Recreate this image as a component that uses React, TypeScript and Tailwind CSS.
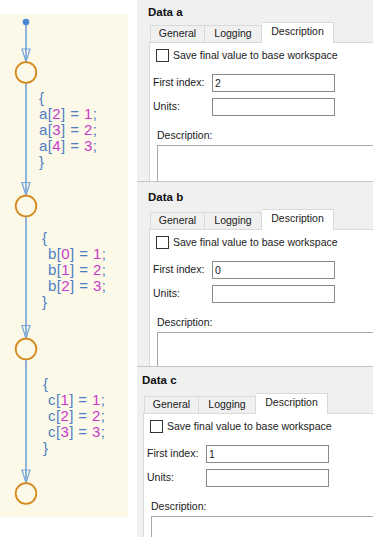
import React from "react";

const blue = "text-[#4d7fc4]";
const pink = "text-[#c63cc6]";

type Block = {
  name: string;
  rows: [string, string][];
  top: string;
  braceLeft: string;
  rowLeft: string;
};

const blocks: Block[] = [
  {
    name: "a",
    rows: [["2", "1"], ["3", "2"], ["4", "3"]],
    top: "top-[90px]",
    braceLeft: "left-[39px]",
    rowLeft: "pl-0",
  },
  {
    name: "b",
    rows: [["0", "1"], ["1", "2"], ["2", "3"]],
    top: "top-[230px]",
    braceLeft: "left-[42px]",
    rowLeft: "pl-[6px]",
  },
  {
    name: "c",
    rows: [["1", "1"], ["2", "2"], ["3", "3"]],
    top: "top-[376px]",
    braceLeft: "left-[43px]",
    rowLeft: "pl-[5px]",
  },
];

const circles = [72.5, 206, 349, 493.5];

function Chart() {
  return (
    <div className="relative w-[128px] h-[537px] shrink-0">
      <div className="absolute left-0 top-[14px] w-[128px] h-[503px] bg-[#fdf9e8]" />
      <svg className="absolute left-0 top-0" width="128" height="537" viewBox="0 0 128 537">
        <line x1="26" y1="22" x2="26" y2="62" stroke="#73a3d9" strokeWidth="1.6" />
        <line x1="26" y1="83" x2="26" y2="195.5" stroke="#73a3d9" strokeWidth="1.6" />
        <line x1="26" y1="216.5" x2="26" y2="338.5" stroke="#73a3d9" strokeWidth="1.6" />
        <line x1="26" y1="359.5" x2="26" y2="483" stroke="#73a3d9" strokeWidth="1.6" />
        <circle cx="26" cy="22" r="3.3" fill="#4a86d0" />
        {circles.map((cy) => (
          <g key={cy}>
            <path
              d={`M22 ${cy - 23.5} L30 ${cy - 23.5} L26 ${cy - 10.5} Z`}
              fill="none"
              stroke="#73a3d9"
              strokeWidth="1.2"
            />
            <circle cx="26" cy={cy} r="10.3" fill="none" stroke="#d4891c" strokeWidth="1.8" />
          </g>
        ))}
      </svg>
      {blocks.map((b) => (
        <div
          key={b.name}
          className={`absolute ${b.top} ${b.braceLeft} text-[15px] leading-[16px] tracking-[0.4px] whitespace-pre`}
          style={{ fontFamily: '"Liberation Sans", Arial, sans-serif' }}
        >
          <div className={blue}>{"{"}</div>
          {b.rows.map(([i, v]) => (
            <div key={i} className={b.rowLeft}>
              <span className={blue}>{b.name}[</span>
              <span className={pink}>{i}</span>
              <span className={blue}>] = </span>
              <span className={pink}>{v}</span>
              <span className={blue}>;</span>
            </div>
          ))}
          <div className={blue}>{"}"}</div>
        </div>
      ))}
    </div>
  );
}

type Panel = {
  name: string;
  first: string;
  box: string;
  title: string;
};

const panels: Panel[] = [
  { name: "a", first: "2", box: "h-[181px] pl-[11px]", title: "h-[22px] pt-[4px]" },
  { name: "b", first: "0", box: "h-[185px] pl-[11px] border-t border-[#c4c4c4]", title: "h-[27px] pt-[7px]" },
  { name: "c", first: "1", box: "h-[185px] pl-[5px] border-t border-[#c4c4c4]", title: "h-[26px] pt-[5px]" },
];

function DataPanel({ p }: { p: Panel }) {
  return (
    <div className={`shrink-0 overflow-hidden bg-[#f0f0f0] ${p.box} flex flex-col`}>
      <div className={`${p.title} text-[11.5px] leading-[16px] font-bold text-[#111]`}>Data {p.name}</div>
      <div className="ml-[1px] flex flex-col flex-1">
        <div className="flex items-end h-[20px] pl-[1px]">
          <div className="h-[17px] w-[55px] border border-b-0 border-[#d9d9d9] bg-[#f0f0f0] flex items-center justify-center">
            General
          </div>
          <div className="h-[17px] w-[57px] border border-b-0 border-l-0 border-[#d9d9d9] bg-[#f0f0f0] flex items-center justify-center">
            Logging
          </div>
          <div className="relative top-[1px] h-[21px] w-[72px] border border-b-0 border-l-0 border-[#d9d9d9] bg-white flex items-center justify-center pb-[2px]">
            Description
          </div>
        </div>
        <div className="flex-1 bg-white border-l border-t border-[#d9d9d9] flex flex-col">
          <label className="mt-[6px] ml-[6px] flex items-center gap-[4px] h-[13px]">
            <span className="w-[13px] h-[13px] border border-[#333] bg-white" />
            <span>Save final value to base workspace</span>
          </label>
          <div className="mt-[12px] ml-[3px] flex items-center">
            <span className="w-[59px]">First index:</span>
            <div className="w-[123px] h-[18px] border border-[#8a8a8a] bg-white pl-[2px] leading-[16px]">{p.first}</div>
          </div>
          <div className="mt-[6px] ml-[3px] flex items-center">
            <span className="w-[59px]">Units:</span>
            <div className="w-[123px] h-[18px] border border-[#8a8a8a] bg-white" />
          </div>
          <div className="mt-[12px] ml-[7px] leading-[14px]">Description:</div>
          <div className="mt-[3px] ml-[7px] flex-1 border-l border-t border-[#a8a8a8] bg-white" />
        </div>
      </div>
    </div>
  );
}

export default function App() {
  return (
    <div
      className="w-[373px] h-[537px] overflow-hidden bg-white flex text-[10.5px] text-[#1a1a1a]"
      style={{ fontFamily: '"Liberation Sans", Arial, sans-serif' }}
    >
      <Chart />
      <div className="ml-[9px] flex-1 flex flex-col overflow-hidden">
        {panels.map((p) => (
          <DataPanel key={p.name} p={p} />
        ))}
      </div>
    </div>
  );
}
